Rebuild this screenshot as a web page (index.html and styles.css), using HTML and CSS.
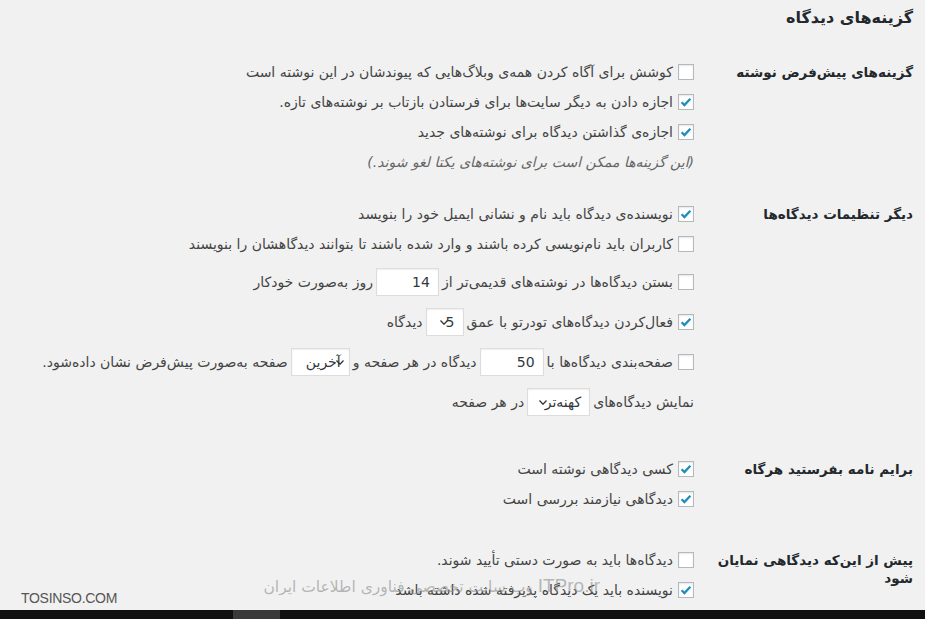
FILE: index.html
```html
<!DOCTYPE html>
<html lang="fa" dir="rtl">
<head>
<meta charset="utf-8">
<title>گزینه‌های دیدگاه</title>
<link rel="stylesheet" href="styles.css">
</head>
<body>
<div class="page">
  <h1 class="title">گزینه‌های دیدگاه</h1>

  <div class="section s1">
    <div class="th">گزینه‌های پیش‌فرض نوشته</div>
    <div class="td">
      <div class="row"><span class="cb"></span><span class="txt">کوشش برای آگاه کردن همه‌ی وبلاگ‌هایی که پیوندشان در این نوشته است</span></div>
      <div class="row"><span class="cb on"><svg viewBox="0 0 16 16"><path d="M3 8.2l3.2 3.3L13 4.2"/></svg></span><span class="txt">اجازه دادن به دیگر سایت‌ها برای فرستادن بازتاب بر نوشته‌های تازه.</span></div>
      <div class="row"><span class="cb on"><svg viewBox="0 0 16 16"><path d="M3 8.2l3.2 3.3L13 4.2"/></svg></span><span class="txt">اجازه‌ی گذاشتن دیدگاه برای نوشته‌های جدید</span></div>
      <div class="row note">(این گزینه‌ها ممکن است برای نوشته‌های یکتا لغو شوند.)</div>
    </div>
  </div>

  <div class="section s2">
    <div class="th">دیگر تنظیمات دیدگاه‌ها</div>
    <div class="td">
      <div class="row"><span class="cb on"><svg viewBox="0 0 16 16"><path d="M3 8.2l3.2 3.3L13 4.2"/></svg></span><span class="txt">نویسنده‌ی دیدگاه باید نام و نشانی ایمیل خود را بنویسد</span></div>
      <div class="row"><span class="cb"></span><span class="txt">کاربران باید نام‌نویسی کرده باشند و وارد شده باشند تا بتوانند دیدگاهشان را بنویسند</span></div>
      <div class="row tall first"><span class="cb"></span><span class="txt">بستن دیدگاه‌ها در نوشته‌های قدیمی‌تر از</span><span class="field w63">14</span><span class="txt">روز به‌صورت خودکار</span></div>
      <div class="row tall"><span class="cb on"><svg viewBox="0 0 16 16"><path d="M3 8.2l3.2 3.3L13 4.2"/></svg></span><span class="txt">فعال‌کردن دیدگاه‌های تودرتو با عمق</span><span class="field sel w38">5<svg class="arrow" viewBox="0 0 8 5"><path d="M0.5 0.5L4 4.2L7.5 0.5"/></svg></span><span class="txt">دیدگاه</span></div>
      <div class="row tall"><span class="cb"></span><span class="txt">صفحه‌بندی دیدگاه‌ها با</span><span class="field w64">50</span><span class="txt">دیدگاه در هر صفحه و</span><span class="field sel w59 arr-r">آخرین<svg class="arrow" viewBox="0 0 8 5"><path d="M0.5 0.5L4 4.2L7.5 0.5"/></svg></span><span class="txt">صفحه به‌صورت پیش‌فرض نشان داده‌شود.</span></div>
      <div class="row tall"><span class="txt">نمایش دیدگاه‌های</span><span class="field sel w63">کهنه‌تر<svg class="arrow" viewBox="0 0 8 5"><path d="M0.5 0.5L4 4.2L7.5 0.5"/></svg></span><span class="txt">در هر صفحه</span></div>
    </div>
  </div>

  <div class="section s3">
    <div class="th">برایم نامه بفرستید هرگاه</div>
    <div class="td">
      <div class="row"><span class="cb on"><svg viewBox="0 0 16 16"><path d="M3 8.2l3.2 3.3L13 4.2"/></svg></span><span class="txt">کسی دیدگاهی نوشته است</span></div>
      <div class="row"><span class="cb on"><svg viewBox="0 0 16 16"><path d="M3 8.2l3.2 3.3L13 4.2"/></svg></span><span class="txt">دیدگاهی نیازمند بررسی است</span></div>
    </div>
  </div>

  <div class="section s4">
    <div class="th">پیش از این‌که دیدگاهی نمایان<br>شود</div>
    <div class="td">
      <div class="row"><span class="cb"></span><span class="txt">دیدگاه‌ها باید به صورت دستی تأیید شوند.</span></div>
      <div class="row"><span class="cb on"><svg viewBox="0 0 16 16"><path d="M3 8.2l3.2 3.3L13 4.2"/></svg></span><span class="txt">نویسنده باید یک دیدگاه پذیرفته شده داشته باشد</span></div>
    </div>
  </div>
</div>

<div class="taskbar"><span class="tb-item"></span></div>

<div class="wm"><span class="wm-en">ITPro.ir</span> وب سایت تخصصی فناوری اطلاعات ایران</div>
<div class="brand">TOSINSO.COM</div>
</body>
</html>
```

FILE: styles.css
```css
html, body {
  margin: 0;
  padding: 0;
}
body {
  direction: rtl;
  background: #f1f1f1;
  color: #444;
  font-family: "DejaVu Sans", Tahoma, sans-serif;
  font-size: 14px;
  height: 619px;
  overflow: hidden;
  display: flex;
  flex-direction: column;
  position: relative;
}
.page {
  padding-right: 12px;
}
.title {
  margin: 6px 0 0;
  font-size: 16px;
  line-height: 24px;
  font-weight: bold;
  color: #23282d;
}
.section {
  display: flex;
  align-items: flex-start;
}
.s1 { margin-top: 27px; }
.s2 { margin-top: 22px; }
.s3 { margin-top: 32px; }
.s4 { margin-top: 31px; }
.th {
  width: 193px;
  flex: none;
  padding-top: 6px;
  line-height: 18px;
  font-size: 13.5px;
  font-weight: bold;
  color: #23282d;
  white-space: nowrap;
}
.td {
  margin-right: 26px;
  display: flex;
  flex-direction: column;
}
.row {
  display: flex;
  align-items: center;
  height: 30px;
  white-space: nowrap;
}
.row.tall { height: 40px; }
.row.first { margin-top: 3px; }
.cb {
  width: 16px;
  height: 16px;
  box-sizing: border-box;
  border: 1px solid #b4b9be;
  background: #fff;
  box-shadow: inset 0 1px 2px rgba(0,0,0,0.1);
  flex: none;
  margin-left: 5px;
  display: flex;
  align-items: center;
  justify-content: center;
}
.cb svg {
  width: 14px;
  height: 14px;
}
.cb svg path {
  fill: none;
  stroke: #1e8cbe;
  stroke-width: 2.6;
  stroke-linecap: butt;
  stroke-linejoin: miter;
}
.txt { color: #444; }
.note {
  font-style: italic;
  color: #666;
}
.field {
  height: 28px;
  box-sizing: border-box;
  border: 1px solid #ddd;
  background: #fff;
  box-shadow: inset 0 1px 2px rgba(0,0,0,0.07);
  margin: 0 3px;
  padding: 0 8px 0 4px;
  display: flex;
  align-items: center;
  font-size: 14px;
  color: #32373c;
  flex: none;
  position: relative;
  direction: rtl;
}
.w63 { width: 63px; }
.w64 { width: 64px; }
.w59 { width: 59px; }
.w38 { width: 38px; }
.sel .arrow {
  width: 8px;
  height: 5px;
  margin-right: -2px;
}
.sel.arr-r .arrow {
  order: -1;
  margin-right: -3px;
  margin-left: -5px;
}
.arrow path {
  fill: none;
  stroke: #333;
  stroke-width: 1.3;
}
.taskbar {
  margin-top: auto;
  height: 9px;
  background: #101010;
  flex: none;
  display: flex;
  direction: ltr;
}
.tb-item {
  margin-left: 233px;
  width: 47px;
  background: #3a3a3a;
}
.wm {
  position: absolute;
  right: 325px;
  top: 575px;
  font-size: 15.5px;
  line-height: 22px;
  color: rgba(140,140,140,0.6);
  white-space: nowrap;
}
.wm-en {
  font-family: "Liberation Sans", sans-serif;
  font-size: 19px;
}
.brand {
  position: absolute;
  left: 21px;
  top: 590px;
  direction: ltr;
  font-family: "Liberation Sans", sans-serif;
  font-size: 14px;
  line-height: 16px;
  color: #555;
  letter-spacing: -0.3px;
}
```
